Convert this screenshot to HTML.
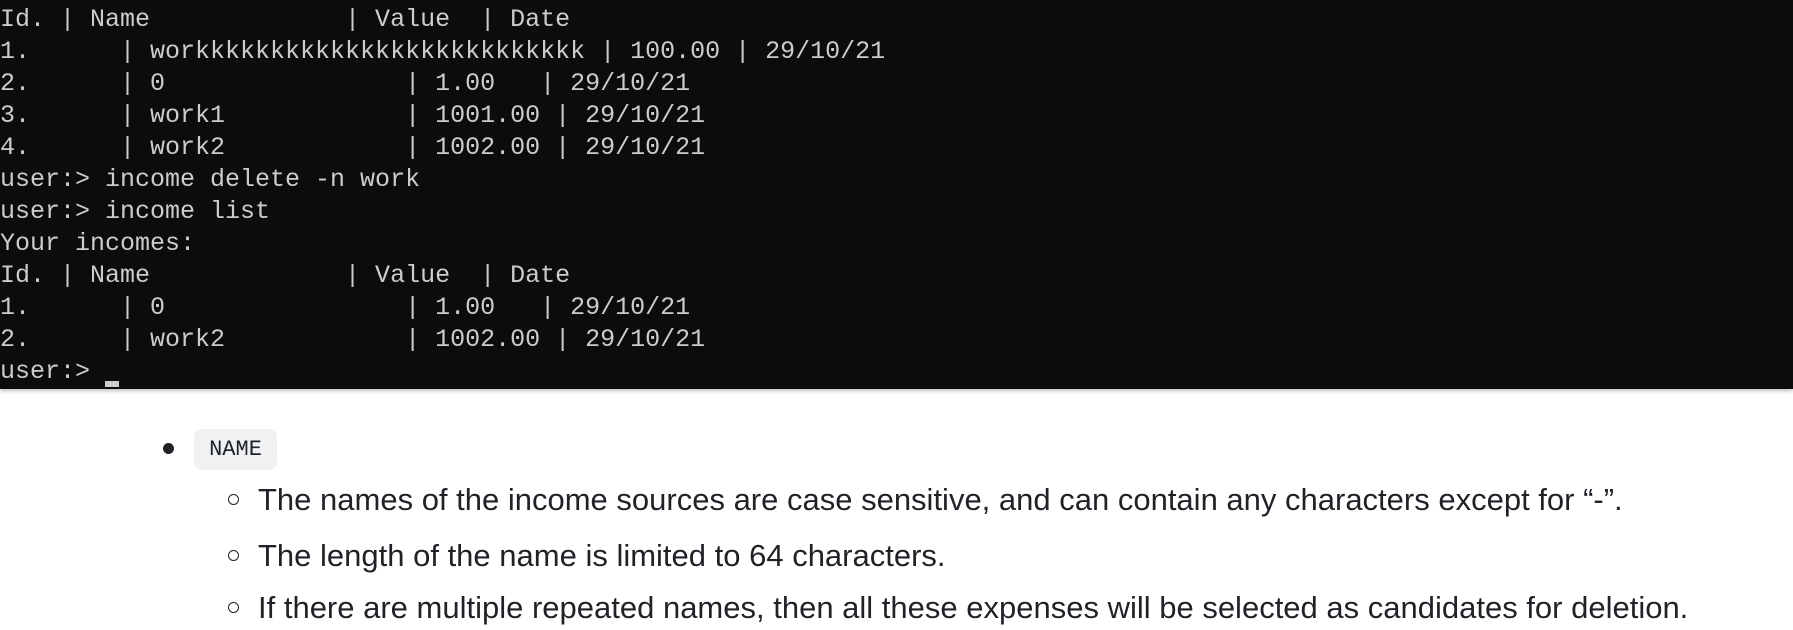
<!DOCTYPE html>
<html><head><meta charset="utf-8"><style>
html,body{margin:0;padding:0;background:#fff;width:1793px;height:630px;overflow:hidden}
.term{position:absolute;left:0;top:0;width:1793px;height:389px;background:#0c0c0c;box-shadow:0 2px 4px rgba(0,0,0,.25)}
pre{margin:0;padding:4px 0 0 0;font-family:"Liberation Mono",monospace;font-size:25px;line-height:32px;color:#cccccc;white-space:pre}
.cur{position:absolute;left:105px;top:381px;width:14px;height:6px;background:#ccc}
.doc{position:absolute;left:0;top:0;font-family:"Liberation Sans",sans-serif;color:#1f2328}
.dot{position:absolute;left:163px;top:443px;width:11px;height:11px;border-radius:50%;background:#1f2328}
.code{position:absolute;left:194px;top:429px;width:83px;height:41px;background:#eff1f3;border-radius:8px;font-family:"Liberation Mono",monospace;font-size:22px;line-height:41px;text-align:center}
.li{position:absolute;left:258px;font-size:31px;line-height:34px;white-space:nowrap}
.ci{position:absolute;left:228px;width:9px;height:9px;border:1.5px solid #1f2328;border-radius:50%}
</style></head><body>
<div class="term"><pre>Id. | Name             | Value  | Date
1.      | workkkkkkkkkkkkkkkkkkkkkkkkkk | 100.00 | 29/10/21
2.      | 0                | 1.00   | 29/10/21
3.      | work1            | 1001.00 | 29/10/21
4.      | work2            | 1002.00 | 29/10/21
user:&gt; income delete -n work
user:&gt; income list
Your incomes:
Id. | Name             | Value  | Date
1.      | 0                | 1.00   | 29/10/21
2.      | work2            | 1002.00 | 29/10/21
user:&gt; </pre><div class="cur"></div></div>
<div class="doc">
<div class="dot"></div>
<div class="code">NAME</div>
<div class="ci" style="top:494px"></div><div class="li" style="top:483px">The names of the income sources are case sensitive, and can contain any characters except for “-”.</div>
<div class="ci" style="top:550px"></div><div class="li" style="top:539px">The length of the name is limited to 64 characters.</div>
<div class="ci" style="top:602px"></div><div class="li" style="top:591px">If there are multiple repeated names, then all these expenses will be selected as candidates for deletion.</div>
</div>
</body></html>
